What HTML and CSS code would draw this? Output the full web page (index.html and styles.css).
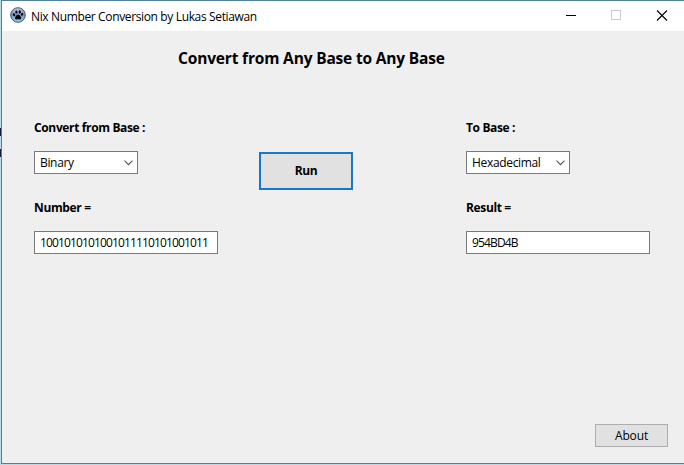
FILE: index.html
```html
<!DOCTYPE html>
<html lang="en">
<head>
<meta charset="utf-8">
<title>Nix Number Conversion by Lukas Setiawan</title>
<link rel="stylesheet" href="styles.css">
</head>
<body>
<div class="window">
  <header class="titlebar">
    <svg class="app-icon" width="16" height="16" viewBox="0 0 16 16">
      <defs><linearGradient id="ball" x1="0" y1="0" x2="0" y2="1"><stop offset="0" stop-color="#b9c4e2"/><stop offset=".5" stop-color="#7f95bc"/><stop offset="1" stop-color="#8ad4f4"/></linearGradient></defs>
      <circle cx="8" cy="8" r="7.3" fill="url(#ball)" stroke="#47536d" stroke-width="1"/>
      <g fill="#05080f"><ellipse cx="4" cy="7.7" rx="1.1" ry="1.5" transform="rotate(-25 4 7.7)"/><ellipse cx="6.4" cy="5" rx="1.1" ry="1.6"/><ellipse cx="9.8" cy="4.9" rx="1.1" ry="1.6"/><ellipse cx="12.1" cy="7.3" rx="1.1" ry="1.5" transform="rotate(25 12.1 7.3)"/><path d="M8.1 7.8C9.7 7.8 11.5 10 11.2 11.6C10.8 12.9 9.3 12.2 8.1 12.3C6.8 12.2 5.4 12.9 5.1 11.6C4.8 10 6.5 7.8 8.1 7.8Z"/></g>
    </svg>
    <span class="caption">Nix Number Conversion by Lukas Setiawan</span>
    <svg class="controls" width="138" height="29" viewBox="0 0 138 29" fill="none" shape-rendering="crispEdges">
      <path d="M20 14.5H30" stroke="#000"/>
      <rect x="65.5" y="9.5" width="9" height="9" stroke="#ccc"/>
      <path d="M111 9.5L121 19.5M121 9.5L111 19.5" stroke="#000" stroke-width="1.1" shape-rendering="auto"/>
    </svg>
  </header>
  <main class="client">
    <h1 class="heading">Convert from Any Base to Any Base</h1>
    <div class="form">
      <section class="group">
        <div class="label">Convert from Base :</div>
        <div class="combo"><span>Binary</span><svg width="9" height="6" viewBox="0 0 9 6"><path d="M.5 .7L4.5 4.7L8.5 .7" fill="none" stroke="#555" stroke-width="1.1"/></svg></div>
        <div class="label">Number =</div>
        <div class="field"><span>1001010101001011110101001011</span></div>
      </section>
      <button class="run">Run</button>
      <section class="group">
        <div class="label">To Base :</div>
        <div class="combo"><span>Hexadecimal</span><svg width="9" height="6" viewBox="0 0 9 6"><path d="M.5 .7L4.5 4.7L8.5 .7" fill="none" stroke="#555" stroke-width="1.1"/></svg></div>
        <div class="label">Result =</div>
        <div class="field"><span>954BD4B</span></div>
      </section>
    </div>
    <footer class="footer"><button class="about">About</button></footer>
  </main>
</div>
</body>
</html>
```
FILE: styles.css
```css
* { box-sizing: border-box; }
body {
  margin: 0;
  height: 465px;
  padding: 0 0 1px 1px;
  overflow: hidden;
  background: linear-gradient(#18183a, #18183a) 0 128px / 1px 8px no-repeat,
    linear-gradient(#18183a, #18183a) 0 149px / 1px 8px no-repeat, #b9dceb;
  font: 12px "Open Sans", "Noto Sans", sans-serif;
  color: #000;
}
.window {
  height: 464px;
  border: 1px solid #4f819d;
  border-right: 0;
  background: #efefef;
  display: flex;
  flex-direction: column;
}
.titlebar {
  height: 30px;
  flex: none;
  background: #fff;
  display: flex;
  align-items: flex-start;
  padding: 0 0 0 8px;
}
.app-icon { margin-top: 6px; flex: none; }
.caption { margin: 7px 0 0 5px; line-height: 18px; letter-spacing: -.36px; white-space: nowrap; }
.controls { margin-left: auto; flex: none; }
.client { flex: 1; display: flex; flex-direction: column; }
.heading {
  margin: 16px 0 0 176px;
  font-size: 15.5px;
  line-height: 22px;
  font-weight: 700;
  letter-spacing: -.17px;
  white-space: nowrap;
}
.form {
  margin: 49px 0 0 32px;
  display: grid;
  grid-template-columns: 225px 207px 184px;
  align-items: start;
}
.group { width: 184px; }
.label { height: 18px; line-height: 19px; font-weight: 700; letter-spacing: -.36px; white-space: nowrap; }
.combo, .field {
  height: 23px;
  border: 1px solid #7a7a7a;
  background: #fff;
  display: flex;
  align-items: center;
  padding: 0 4px 0 5px;
  margin: 15px 0 24px;
  line-height: 19px;
}
.combo { width: 104px; justify-content: space-between; letter-spacing: -.33px; }
.field { width: 184px; margin-bottom: 0; letter-spacing: -.86px; }
button {
  padding: 0;
  border: 1px solid #adadad;
  background: #e1e1e1;
  font: inherit;
  color: inherit;
}
.run {
  width: 94px;
  height: 38px;
  margin-top: 34px;
  padding-bottom: 1px;
  border: 2px solid #1578c8;
  font-weight: 700;
  letter-spacing: -.4px;
}
.footer { margin: auto 16px 16px auto; display: flex; }
.about { width: 73px; height: 23px; padding-top: 1px; line-height: 18px; letter-spacing: -.15px; }
```
